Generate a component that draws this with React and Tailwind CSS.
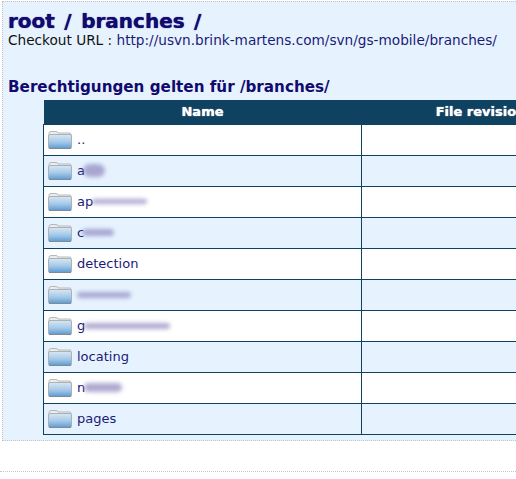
const ROWS = [
  { name: "..", smear: null },
  { name: "a", smear: "w-[22px] h-[13px] -ml-[2px]" },
  { name: "ap", smear: "w-[55px] h-[5px] -ml-[1px]" },
  { name: "c", smear: "w-[32px] h-[7px] -ml-[2px]" },
  { name: "detection", smear: null },
  { name: "", smear: "w-[54px] h-[6px]" },
  { name: "g", smear: "w-[86px] h-[6px] -ml-[1px]" },
  { name: "locating", smear: null },
  { name: "n", smear: "w-[38px] h-[9px] -ml-[1px]" },
  { name: "pages", smear: null },
];

function Folder() {
  return (
    <svg width="24" height="20" viewBox="0 0 24 20" className="shrink-0">
      <defs>
        <linearGradient id="folderFront" x1="0" y1="0" x2="0" y2="1">
          <stop offset="0" stopColor="#d9e7f4" />
          <stop offset="0.55" stopColor="#a3c8e8" />
          <stop offset="1" stopColor="#5c9bd3" />
        </linearGradient>
      </defs>
      <path d="M1 3.5 Q1 1.5 3 1.5 H8 Q9.5 1.5 10 3 H22 Q23 3 23 4.5 V8 H1 Z" fill="#ececec" stroke="#b8b8b8" />
      <rect x="0.5" y="4.5" width="23" height="14" rx="1.5" fill="url(#folderFront)" stroke="#aab1b7" />
      <path d="M1 18.5 H23" stroke="#7f8a94" />
    </svg>
  );
}

export default function App() {
  return (
    <div className="h-[479px] w-[516px] overflow-hidden bg-white font-['DejaVu_Sans',Verdana,sans-serif]">
      <div className="ml-[2px] mt-px h-[440px] w-[700px] border-l border-t border-b border-dotted border-[#c4c4c4] bg-[#e6f3ff] pl-[5px]">
        <h1 className="pt-[7px] text-[20px] leading-[24px] font-bold text-[#120a6e] [word-spacing:2.5px] [text-shadow:0_0_1px_#120a6e]">root / branches /</h1>
        <p className="text-[13.65px] leading-[15px] text-[#111]">
          Checkout URL : <a className="text-[#1a1a78]">http://usvn.brink-martens.com/svn/gs-mobile/branches/</a>
        </p>
        <h2 className="mt-[30px] text-[15.2px] leading-[18px] font-bold text-[#120a6e]">Berechtigungen gelten für /branches/</h2>
        <table className="mt-[4px] ml-[35px] w-[557px] table-fixed border-collapse text-[13px]">
          <thead>
            <tr className="h-[24px] bg-[#0f4261] text-white [text-shadow:0_0_1px_#fff]">
              <th className="w-[318px] p-0 font-bold">Name</th>
              <th className="p-0 font-bold">File revision</th>
            </tr>
          </thead>
          <tbody>
            {ROWS.map((row, i) => (
              <tr key={i} className={i % 2 === 0 ? "h-[31px] bg-white" : "h-[31px] bg-[#e6f3ff]"}>
                <td className="border border-[#0f4261] p-0 pl-[4px]">
                  <div className="flex items-center gap-[5px] text-[#1a1a78]">
                    <Folder />
                    <span className="flex items-center">
                      {row.name}
                      {row.smear && <span className={`${row.smear} rounded-full bg-[#8f86bd] opacity-70 blur-[2px]`} />}
                    </span>
                  </div>
                </td>
                <td className="border border-[#0f4261] p-0" />
              </tr>
            ))}
          </tbody>
        </table>
      </div>
      <div className="mt-[30px] border-t border-dotted border-[#c4c4c4]" />
    </div>
  );
}
